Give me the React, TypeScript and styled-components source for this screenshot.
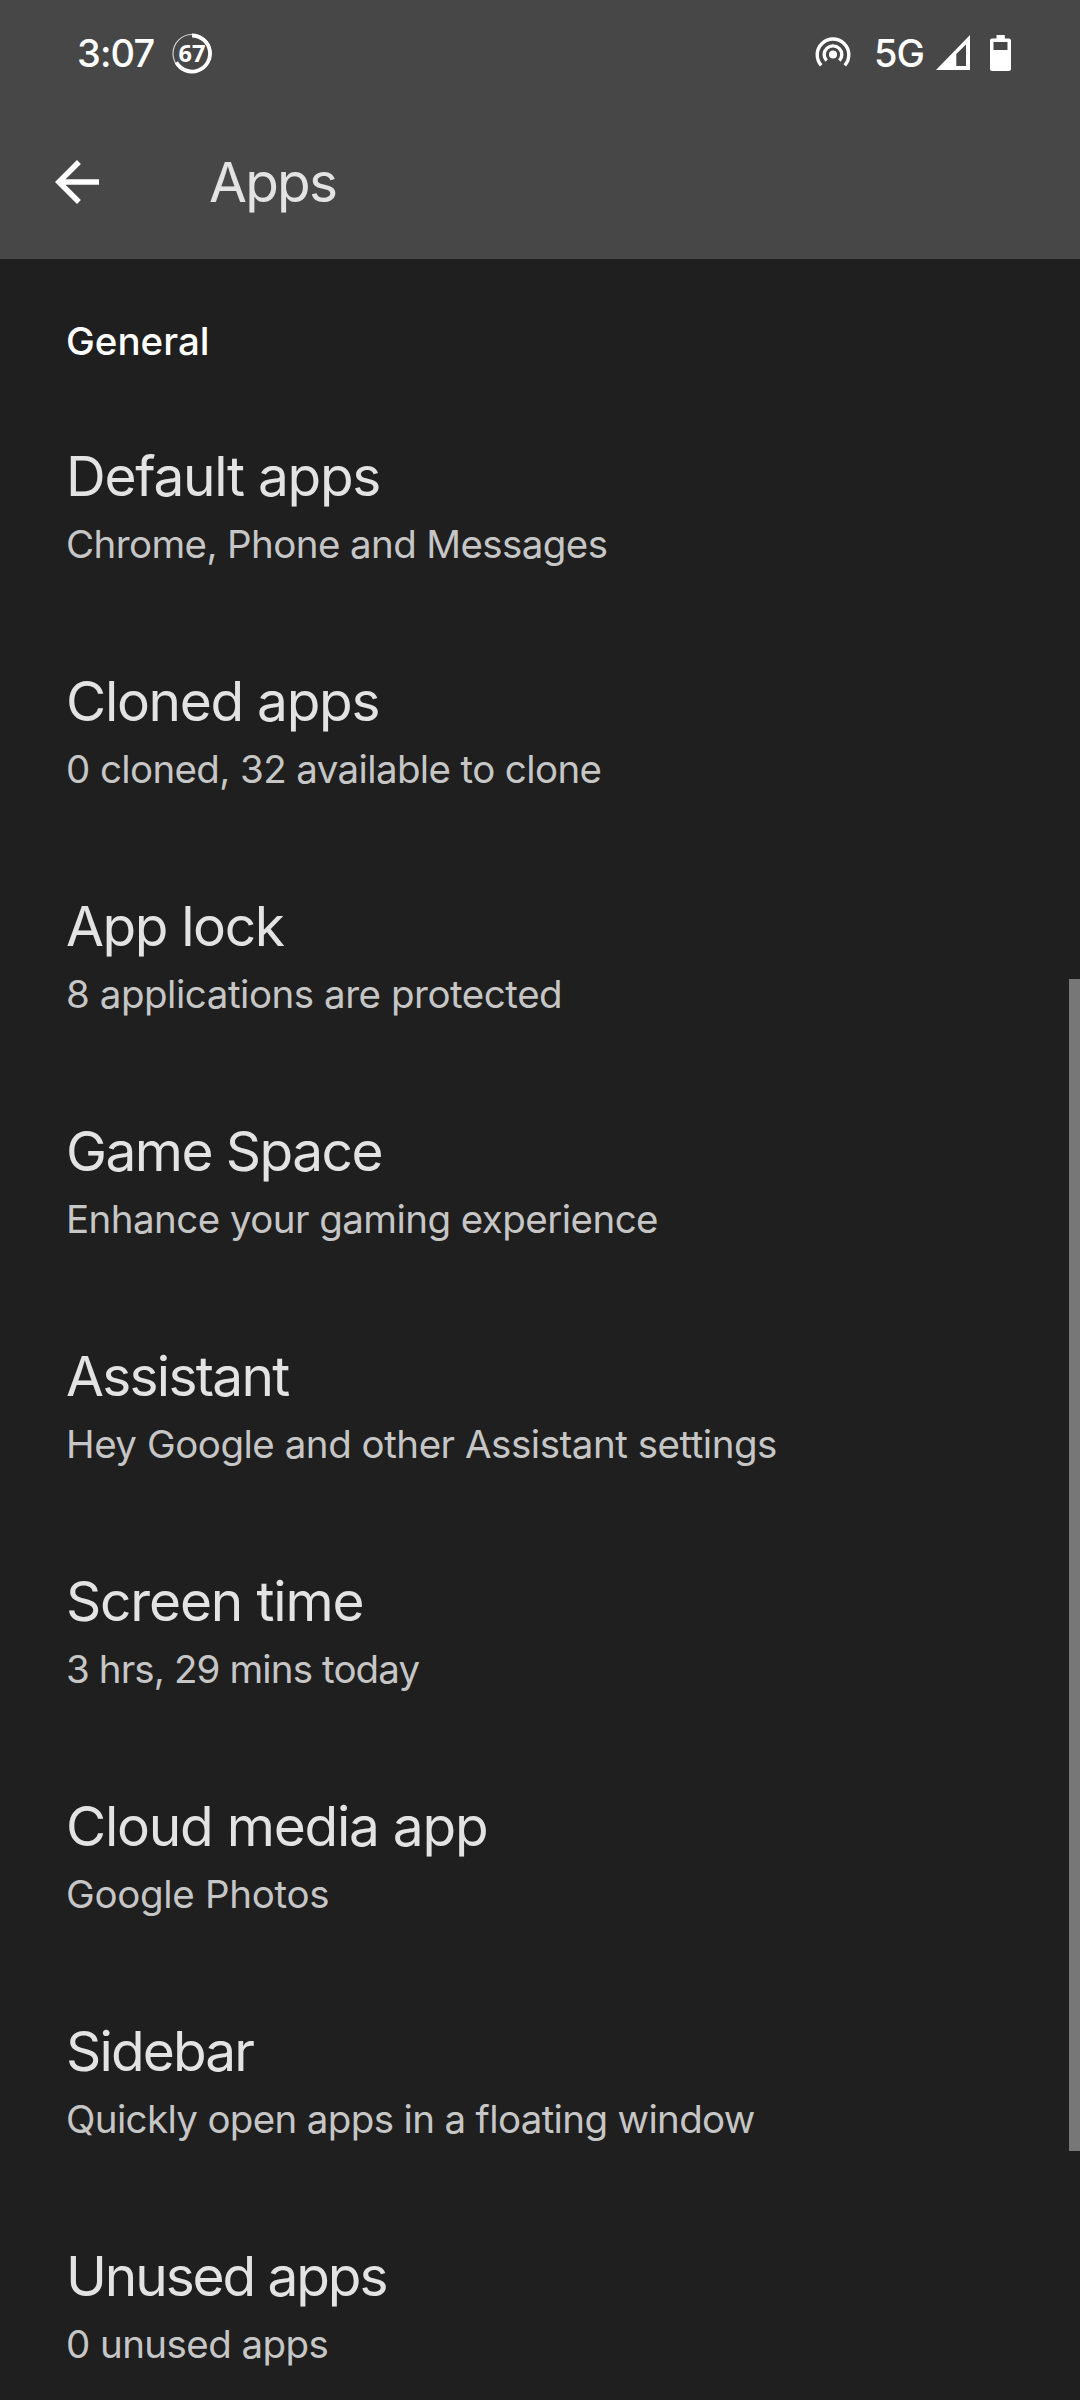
import React from 'react';
import styled, { createGlobalStyle } from 'styled-components';

const GlobalStyle = createGlobalStyle`
  body {
    margin: 0;
    background: #1f1f1f;
  }
`;

const Screen = styled.div`
  position: relative;
  display: flex;
  flex-direction: column;
  width: 1080px;
  height: 2400px;
  overflow: hidden;
  background: #1f1f1f;
  font-family: Inter, Roboto, sans-serif;
`;

const Header = styled.header`
  flex: none;
  height: 259px;
  background: #474747;
`;

const StatusBar = styled.div`
  display: flex;
  align-items: center;
  justify-content: space-between;
  box-sizing: border-box;
  height: 105px;
  padding: 0 69px 0 77px;
  color: #fff;
`;

const StatusGroup = styled.div`
  display: flex;
  align-items: center;
`;

const StatusText = styled.span<{ $width: number; $tracking: number }>`
  width: ${(p) => p.$width}px;
  font-size: 38px;
  font-weight: 500;
  line-height: 50px;
  letter-spacing: ${(p) => p.$tracking}px;
  white-space: nowrap;
`;

const StatusIcon = styled.svg<{ $gap?: number }>`
  display: block;
  flex: none;
  margin-right: ${(p) => p.$gap ?? 0}px;
`;

const RingLabel = styled.text`
  font-family: 'Open Sans', sans-serif;
  font-size: 23.5px;
  font-weight: 700;
`;

const Toolbar = styled.div`
  display: flex;
  align-items: center;
  height: 154px;
  padding-left: 44px;
`;

const BackButton = styled.button`
  display: flex;
  width: 66px;
  height: 66px;
  margin: 0 99px 0 0;
  padding: 0;
  border: 0;
  background: none;
  color: #fff;
`;

const PageTitle = styled.h1`
  margin: 0;
  color: #e3e3e3;
  font-size: 55px;
  font-weight: 400;
  line-height: 68px;
  letter-spacing: -1.75px;
`;

const SectionTitle = styled.h2`
  flex: none;
  margin: 0;
  padding: 57px 66px 27px;
  color: #fff;
  font-size: 38.5px;
  font-weight: 500;
  line-height: 50px;
`;

const List = styled.ul`
  display: flex;
  flex-direction: column;
  margin: 0;
  padding: 0;
  list-style: none;
`;

const Row = styled.li`
  display: flex;
  flex-direction: column;
  gap: 9px;
  padding: 49px 66px;
  white-space: nowrap;
`;

const RowTitle = styled.span<{ $tracking: number }>`
  color: #e3e3e3;
  font-size: 55px;
  line-height: 68px;
  letter-spacing: ${(p) => p.$tracking}px;
`;

const RowSummary = styled.span<{ $tracking: number }>`
  color: #c6c6c6;
  font-size: 38.5px;
  line-height: 50px;
  letter-spacing: ${(p) => p.$tracking}px;
`;

const ScrollThumb = styled.div`
  position: absolute;
  top: 979px;
  right: 0;
  width: 11px;
  height: 1172px;
  background: #777;
`;

interface Item {
  title: string;
  summary: string;
  titleTracking: number;
  summaryTracking: number;
}

const items: Item[] = [
  { title: 'Default apps', summary: 'Chrome, Phone and Messages', titleTracking: -1.29, summaryTracking: -0.6 },
  { title: 'Cloned apps', summary: '0 cloned, 32 available to clone', titleTracking: -1.3, summaryTracking: -0.62 },
  { title: 'App lock', summary: '8 applications are protected', titleTracking: -1.4, summaryTracking: -0.46 },
  { title: 'Game Space', summary: 'Enhance your gaming experience', titleTracking: -1.56, summaryTracking: -0.55 },
  { title: 'Assistant', summary: 'Hey Google and other Assistant settings', titleTracking: -1.72, summaryTracking: -0.47 },
  { title: 'Screen time', summary: '3 hrs, 29 mins today', titleTracking: -1.17, summaryTracking: -0.88 },
  { title: 'Cloud media app', summary: 'Google Photos', titleTracking: -1.24, summaryTracking: -0.3 },
  { title: 'Sidebar', summary: 'Quickly open apps in a floating window', titleTracking: -1.85, summaryTracking: -0.65 },
  { title: 'Unused apps', summary: '0 unused apps', titleTracking: -2.1, summaryTracking: -0.57 },
];

const UsageRing = () => (
  <StatusIcon width="42" height="42" viewBox="0 0 42 42" fill="none" stroke="#fff">
    <circle cx="20" cy="21.5" r="19" strokeWidth="1.2" opacity="0.75" />
    <path d="M20 3.5A18 18 0 1 1 4.3 30.3" strokeWidth="3.8" />
    <RingLabel x="20" y="30.3" textAnchor="middle" fill="#fff" stroke="none">
      67
    </RingLabel>
  </StatusIcon>
);

const HotspotIcon = () => (
  <StatusIcon $gap={23} width="36" height="36" viewBox="0 0 36 36" fill="none" stroke="#fff" strokeWidth="3.4">
    <circle cx="18" cy="19.5" r="4" fill="#fff" stroke="none" />
    <path d="M11.6 25.7A8.8 8.8 0 1 1 24.4 25.7" />
    <path d="M6.2 30.3A15.8 15.8 0 1 1 29.8 30.3" />
  </StatusIcon>
);

const SignalIcon = () => (
  <StatusIcon $gap={20} width="34" height="35" viewBox="0 0 34 35" fill="#fff" fillRule="evenodd">
    <path d="M0 35L34 0V35ZM20.3 19V31H30V9.5Z" />
  </StatusIcon>
);

const BatteryIcon = () => (
  <StatusIcon width="21" height="36" viewBox="0 0 21 36" fill="#fff" fillRule="evenodd">
    <path d="M6.5 0H14.8V3.4H19A2 2 0 0 1 21 5.4V34A2 2 0 0 1 19 36H2A2 2 0 0 1 0 34V5.4A2 2 0 0 1 2 3.4H6.5ZM3.5 7V15H17.5V7Z" />
  </StatusIcon>
);

export default function App() {
  return (
    <Screen>
      <GlobalStyle />
      <Header>
        <StatusBar>
          <StatusGroup>
            <StatusText $width={95} $tracking={-0.9}>3:07</StatusText>
            <UsageRing />
          </StatusGroup>
          <StatusGroup>
            <HotspotIcon />
            <StatusText $width={62} $tracking={-1}>5G</StatusText>
            <SignalIcon />
            <BatteryIcon />
          </StatusGroup>
        </StatusBar>
        <Toolbar>
          <BackButton aria-label="Back">
            <svg width="66" height="66" viewBox="0 0 24 24" fill="currentColor">
              <path d="M20 11H7.83l5.59-5.59L12 4l-8 8 8 8 1.41-1.41L7.83 13H20v-2z" />
            </svg>
          </BackButton>
          <PageTitle>Apps</PageTitle>
        </Toolbar>
      </Header>
      <SectionTitle>General</SectionTitle>
      <List>
        {items.map((item) => (
          <Row key={item.title}>
            <RowTitle $tracking={item.titleTracking}>{item.title}</RowTitle>
            <RowSummary $tracking={item.summaryTracking}>{item.summary}</RowSummary>
          </Row>
        ))}
      </List>
      <ScrollThumb />
    </Screen>
  );
}
